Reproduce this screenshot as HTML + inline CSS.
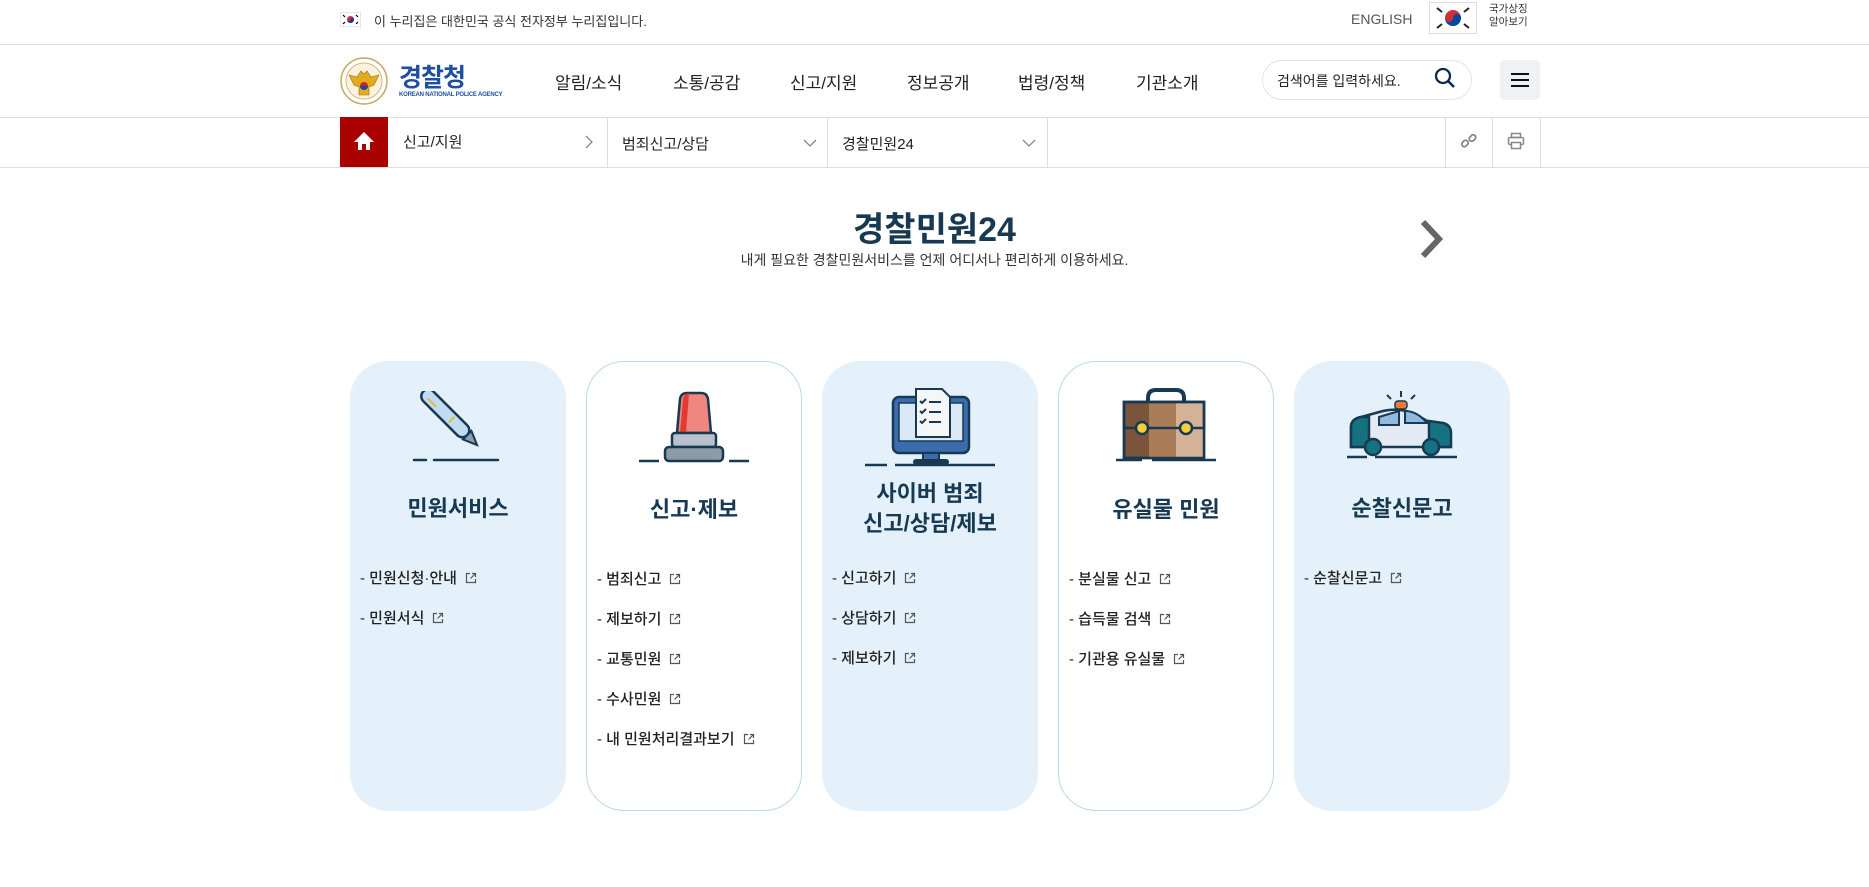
<!DOCTYPE html>
<html><head><meta charset="utf-8">
<style>
*{margin:0;padding:0;box-sizing:border-box}
body{width:1869px;height:887px;overflow:hidden;background:#fff;font-family:"Liberation Sans","Noto Sans CJK KR",sans-serif;color:#222;position:relative}
.a{position:absolute}
.hl{position:absolute;left:0;width:1869px;height:1px;background:#ddd}
.vl{position:absolute;width:1px;background:#ddd}
.nav{position:absolute;top:69px;font-size:17px;color:#222}
.card{position:absolute;top:361px;width:216px;height:450px;border-radius:38px}
.bg{background:#e4f1fa}
.bd{border:1px solid #b9d8ee;background:#fff}
.ct{position:absolute;left:0;width:100%;text-align:center;font-size:22px;font-weight:bold;color:#173a52}
.lk{position:absolute;left:10px;font-size:15px;color:#222;font-weight:500;white-space:nowrap}
.lk svg{vertical-align:-1px;margin-left:8px}
.icon{position:absolute;left:50%;transform:translateX(-50%);top:26px}
</style></head><body>
<svg class="a" style="left:340px;top:12px" width="21" height="15" viewBox="0 0 21 15"><rect width="21" height="15" fill="#fff" stroke="#ccc"/><circle cx="10.5" cy="7.5" r="3.5" fill="#cd2e3a"/><path d="M7 7.5a3.5 3.5 0 0 0 7 0a1.75 1.75 0 0 0-3.5 0a1.75 1.75 0 0 1-3.5 0z" fill="#0047a0"/><g stroke="#000" stroke-width="1.2"><path d="M3 3l2 2M16 3l2 2M3 12l2-2M16 12l2-2"/></g></svg>
<div class="a" style="left:374px;top:11px;font-size:13px;color:#333">이 누리집은 대한민국 공식 전자정부 누리집입니다.</div>
<div class="a" style="left:1351px;top:11px;font-size:14px;color:#555">ENGLISH</div>
<svg class="a" style="left:1429px;top:2px" width="48" height="32" viewBox="0 0 48 32"><rect x=".5" y=".5" width="47" height="31" fill="#fff" stroke="#ddd"/><circle cx="24" cy="16" r="8" fill="#cd2e3a"/><path d="M16 16a8 8 0 0 0 16 0a4 4 0 0 0-8 0a4 4 0 0 1-8 0z" fill="#0047a0"/><g stroke="#222" stroke-width="2"><path d="M8 6l5 4M35 10l5-4M8 26l5-4M35 22l5 4"/></g></svg>
<div class="a" style="left:1489px;top:3px;font-size:10.5px;line-height:13px;color:#333">국가상징<br>알아보기</div>
<div class="hl" style="top:44px"></div>
<svg class="a" style="left:340px;top:57px" width="48" height="48" viewBox="0 0 48 48"><circle cx="24" cy="24" r="23" fill="#fff" stroke="#c9a66b" stroke-width="1.5"/><circle cx="24" cy="24" r="18" fill="#fbf3e0" stroke="#d8b878"/><path d="M9 18l8 2 4-6 3 3 3-3 4 6 8-2-5 10-5 2v8h-10v-8l-5-2z" fill="#e3ac1d" stroke="#9a6b10" stroke-width=".6"/><circle cx="24" cy="29" r="4" fill="#c6262e"/><path d="M20 29a4 4 0 0 0 8 0" fill="#1a4c9e"/></svg>
<div class="a" style="left:399px;top:58px;font-size:25px;font-weight:bold;color:#1f4fa0;letter-spacing:-1px">경찰청</div>
<div class="a" style="left:399px;top:92px;font-size:6px;font-weight:bold;color:#1f4fa0;white-space:nowrap;letter-spacing:-0.2px">KOREAN NATIONAL POLICE AGENCY</div>
<div class="nav" style="left:555px">알림/소식</div>
<div class="nav" style="left:673px">소통/공감</div>
<div class="nav" style="left:790px">신고/지원</div>
<div class="nav" style="left:907px">정보공개</div>
<div class="nav" style="left:1018px">법령/정책</div>
<div class="nav" style="left:1136px">기관소개</div>
<div class="a" style="left:1262px;top:60px;width:210px;height:40px;border:1px solid #e4e4e4;border-radius:20px"></div>
<div class="a" style="left:1277px;top:71px;font-size:14px;color:#222">검색어를 입력하세요.</div>
<svg class="a" style="left:1434px;top:67px" width="22" height="22" viewBox="0 0 22 22"><circle cx="9" cy="9" r="7" fill="none" stroke="#0c2a4f" stroke-width="2.3"/><path d="M14 14l6 6" stroke="#0c2a4f" stroke-width="2.5"/></svg>
<div class="a" style="left:1500px;top:60px;width:40px;height:40px;border-radius:5px;background:#eef1f6"></div>
<svg class="a" style="left:1510px;top:71px" width="20" height="18"><path d="M1 3h18M1 9h18M1 15h18" stroke="#111" stroke-width="2"/></svg>
<div class="hl" style="top:117px"></div>
<div class="a" style="left:340px;top:117px;width:48px;height:50px;background:#a90000"></div>
<svg class="a" style="left:353px;top:130px" width="22" height="22" viewBox="0 0 22 22"><path d="M11 2L1 12h4v8h4v-6h4v6h4v-8h4z" fill="#fff"/></svg>
<div class="a" style="left:403px;top:131px;font-size:15px">신고/지원</div>
<svg class="a" style="left:585px;top:135px" width="8" height="14"><path d="M1 1l6 6-6 6" fill="none" stroke="#888" stroke-width="1.3"/></svg>
<div class="vl" style="left:607px;top:117px;height:50px"></div>
<div class="a" style="left:622px;top:133px;font-size:15px">범죄신고/상담</div>
<svg class="a" style="left:803px;top:139px" width="14" height="8"><path d="M1 1l6 6 6-6" fill="none" stroke="#888" stroke-width="1.3"/></svg>
<div class="vl" style="left:827px;top:117px;height:50px"></div>
<div class="a" style="left:842px;top:133px;font-size:15px">경찰민원24</div>
<svg class="a" style="left:1022px;top:139px" width="14" height="8"><path d="M1 1l6 6 6-6" fill="none" stroke="#888" stroke-width="1.3"/></svg>
<div class="vl" style="left:1047px;top:117px;height:50px"></div>
<div class="vl" style="left:1445px;top:117px;height:50px"></div>
<div class="vl" style="left:1492px;top:117px;height:50px"></div>
<div class="vl" style="left:1540px;top:117px;height:50px"></div>
<svg class="a" style="left:1460px;top:132px" width="18" height="18" viewBox="0 0 18 18"><g fill="none" stroke="#888" stroke-width="1.8"><rect x="1.5" y="9" width="7" height="5" rx="2.5" transform="rotate(-45 5 11.5)"/><rect x="9" y="3.5" width="7" height="5" rx="2.5" transform="rotate(-45 12.5 6)"/></g></svg>
<svg class="a" style="left:1507px;top:132px" width="18" height="18" viewBox="0 0 18 18"><g fill="none" stroke="#888" stroke-width="1.5"><rect x="4.5" y="1.5" width="9" height="4"/><rect x="1.5" y="5.5" width="15" height="7" rx="1.5"/><rect x="4.5" y="10.5" width="9" height="6" fill="#fff"/></g></svg>
<div class="hl" style="top:167px"></div>
<div class="a" style="left:0;width:1869px;top:202px;text-align:center;font-size:34px;font-weight:bold;color:#173a52">경찰민원24</div>
<div class="a" style="left:0;width:1869px;top:250px;text-align:center;font-size:14px;color:#333">내게 필요한 경찰민원서비스를 언제 어디서나 편리하게 이용하세요.</div>
<svg class="a" style="left:1418px;top:218px" width="28" height="42"><path d="M5 4l16 17-16 17" fill="none" stroke="#666" stroke-width="6"/></svg>

<div class="card bg" style="left:350px">
<svg class="icon" width="100" height="72" viewBox="0 0 100 72" style="top:30px"><g stroke="#173a52" stroke-width="2.5" stroke-linecap="round"><path d="M6 69h12M26 69h64"/></g><g transform="rotate(-45 50 35)"><rect x="43" y="-14" width="14" height="62" rx="7" fill="#bfdcf3" stroke="#173a52" stroke-width="2.5"/><path d="M48 -6v12M46 26h8" stroke="#e3b93a" stroke-width="2"/><path d="M44 48l6 14 6-14z" fill="#8aa0ad" stroke="#173a52" stroke-width="2"/></g></svg>
<div class="ct" style="top:130px">민원서비스</div>
<div class="lk" style="top:206px">- 민원신청·안내<svg width="12" height="12"><path d="M5 1.5H1.5v9h9V7M7 1.5h3.5V5M10.5 1.5L5.5 6.5" fill="none" stroke="#555" stroke-width="1.2"/></svg></div>
<div class="lk" style="top:246px">- 민원서식<svg width="12" height="12"><path d="M5 1.5H1.5v9h9V7M7 1.5h3.5V5M10.5 1.5L5.5 6.5" fill="none" stroke="#555" stroke-width="1.2"/></svg></div>
</div>
<div class="card bd" style="left:586px">
<svg class="icon" width="114" height="72" viewBox="0 0 114 72" style="top:29px"><path d="M2 70h20M92 70h20" stroke="#173a52" stroke-width="2.5"/><path d="M40 42l3-34q1-6 7-6h14q6 0 7 6l3 34z" fill="#f08680" stroke="#173a52" stroke-width="2.5"/><path d="M43 42l3-34q1-5 6-6l-3 40z" fill="#e43a34"/><rect x="35" y="42" width="44" height="14" rx="3" fill="#b9c2cc" stroke="#173a52" stroke-width="2.5"/><rect x="28" y="56" width="58" height="14" rx="4" fill="#8c9ba7" stroke="#173a52" stroke-width="2.5"/></svg>
<div class="ct" style="top:130px">신고·제보</div>
<div class="lk" style="top:206px">- 범죄신고<svg width="12" height="12"><path d="M5 1.5H1.5v9h9V7M7 1.5h3.5V5M10.5 1.5L5.5 6.5" fill="none" stroke="#555" stroke-width="1.2"/></svg></div>
<div class="lk" style="top:246px">- 제보하기<svg width="12" height="12"><path d="M5 1.5H1.5v9h9V7M7 1.5h3.5V5M10.5 1.5L5.5 6.5" fill="none" stroke="#555" stroke-width="1.2"/></svg></div>
<div class="lk" style="top:286px">- 교통민원<svg width="12" height="12"><path d="M5 1.5H1.5v9h9V7M7 1.5h3.5V5M10.5 1.5L5.5 6.5" fill="none" stroke="#555" stroke-width="1.2"/></svg></div>
<div class="lk" style="top:326px">- 수사민원<svg width="12" height="12"><path d="M5 1.5H1.5v9h9V7M7 1.5h3.5V5M10.5 1.5L5.5 6.5" fill="none" stroke="#555" stroke-width="1.2"/></svg></div>
<div class="lk" style="top:366px">- 내 민원처리결과보기<svg width="12" height="12"><path d="M5 1.5H1.5v9h9V7M7 1.5h3.5V5M10.5 1.5L5.5 6.5" fill="none" stroke="#555" stroke-width="1.2"/></svg></div>
</div>
<div class="card bg" style="left:822px">
<svg class="icon" width="134" height="80" viewBox="0 0 134 80" style="top:26px"><path d="M2 78h22M32 78h100" stroke="#173a52" stroke-width="2.5"/><rect x="30" y="10" width="76" height="56" rx="6" fill="#3d6cae" stroke="#173a52" stroke-width="2.5"/><rect x="36" y="16" width="64" height="38" fill="#dbe8f5" stroke="#173a52" stroke-width="1.5"/><rect x="60" y="66" width="16" height="8" fill="#3d6cae" stroke="#173a52" stroke-width="2"/><rect x="50" y="72" width="36" height="6" rx="3" fill="#173a52"/><path d="M53 2h26l8 8v40H53z" fill="#f4f6f8" stroke="#173a52" stroke-width="2"/><g stroke="#173a52" stroke-width="2" fill="none"><path d="M57 14l2 2 4-4M66 15h12M57 24l2 2 4-4M66 25h12M57 34l2 2 4-4M66 35h12"/></g></svg>
<div class="ct" style="top:118px;line-height:30px">사이버 범죄<br>신고/상담/제보</div>
<div class="lk" style="top:206px">- 신고하기<svg width="12" height="12"><path d="M5 1.5H1.5v9h9V7M7 1.5h3.5V5M10.5 1.5L5.5 6.5" fill="none" stroke="#555" stroke-width="1.2"/></svg></div>
<div class="lk" style="top:246px">- 상담하기<svg width="12" height="12"><path d="M5 1.5H1.5v9h9V7M7 1.5h3.5V5M10.5 1.5L5.5 6.5" fill="none" stroke="#555" stroke-width="1.2"/></svg></div>
<div class="lk" style="top:286px">- 제보하기<svg width="12" height="12"><path d="M5 1.5H1.5v9h9V7M7 1.5h3.5V5M10.5 1.5L5.5 6.5" fill="none" stroke="#555" stroke-width="1.2"/></svg></div>
</div>
<div class="card bd" style="left:1058px">
<svg class="icon" width="104" height="74" viewBox="0 0 104 74" style="top:26px"><path d="M2 72h26M38 72h64" stroke="#173a52" stroke-width="2.5"/><path d="M34 14v-4q0-8 8-8h20q8 0 8 8v4" fill="none" stroke="#173a52" stroke-width="4"/><rect x="10" y="14" width="80" height="56" fill="#7a553c" stroke="#173a52" stroke-width="2.5"/><rect x="35" y="14" width="27" height="56" fill="#aa7c57"/><rect x="62" y="14" width="27" height="56" fill="#d3b297"/><rect x="10" y="14" width="80" height="26" fill="none" stroke="#173a52" stroke-width="2.5"/><rect x="10" y="14" width="80" height="56" fill="none" stroke="#173a52" stroke-width="2.5"/><circle cx="28" cy="40" r="6" fill="#f5cf3a" stroke="#173a52" stroke-width="2.5"/><circle cx="72" cy="40" r="6" fill="#f5cf3a" stroke="#173a52" stroke-width="2.5"/></svg>
<div class="ct" style="top:130px">유실물 민원</div>
<div class="lk" style="top:206px">- 분실물 신고<svg width="12" height="12"><path d="M5 1.5H1.5v9h9V7M7 1.5h3.5V5M10.5 1.5L5.5 6.5" fill="none" stroke="#555" stroke-width="1.2"/></svg></div>
<div class="lk" style="top:246px">- 습득물 검색<svg width="12" height="12"><path d="M5 1.5H1.5v9h9V7M7 1.5h3.5V5M10.5 1.5L5.5 6.5" fill="none" stroke="#555" stroke-width="1.2"/></svg></div>
<div class="lk" style="top:286px">- 기관용 유실물<svg width="12" height="12"><path d="M5 1.5H1.5v9h9V7M7 1.5h3.5V5M10.5 1.5L5.5 6.5" fill="none" stroke="#555" stroke-width="1.2"/></svg></div>
</div>
<div class="card bg" style="left:1294px">
<svg class="icon" width="114" height="72" viewBox="0 0 114 72" style="top:28px"><path d="M2 68h20M30 68h82" stroke="#173a52" stroke-width="2.5"/><path d="M42 6l4 4M56 2v6M70 6l-4 4" stroke="#173a52" stroke-width="2"/><rect x="50" y="12" width="12" height="8" rx="3" fill="#f07a3a" stroke="#173a52" stroke-width="1.5"/><path d="M6 58V38q0-8 10-10l22-6q18-4 34 4l10 6 14 2q8 2 8 10v14z" fill="#e4eaf3" stroke="#173a52" stroke-width="2.5"/><path d="M6 58V38q0-8 10-10h8v30z" fill="#157280" stroke="#173a52" stroke-width="2.5"/><path d="M84 32l14 2q8 2 8 10v14H84z" fill="#157280" stroke="#173a52" stroke-width="2.5"/><path d="M34 28l20-6v14H34zM60 22q12 0 22 12H60z" fill="#93b8e0" stroke="#173a52" stroke-width="2"/><circle cx="28" cy="58" r="8" fill="#157280" stroke="#173a52" stroke-width="2.5"/><circle cx="86" cy="58" r="8" fill="#157280" stroke="#173a52" stroke-width="2.5"/></svg>
<div class="ct" style="top:130px">순찰신문고</div>
<div class="lk" style="top:206px">- 순찰신문고<svg width="12" height="12"><path d="M5 1.5H1.5v9h9V7M7 1.5h3.5V5M10.5 1.5L5.5 6.5" fill="none" stroke="#555" stroke-width="1.2"/></svg></div>
</div>
</body></html>
